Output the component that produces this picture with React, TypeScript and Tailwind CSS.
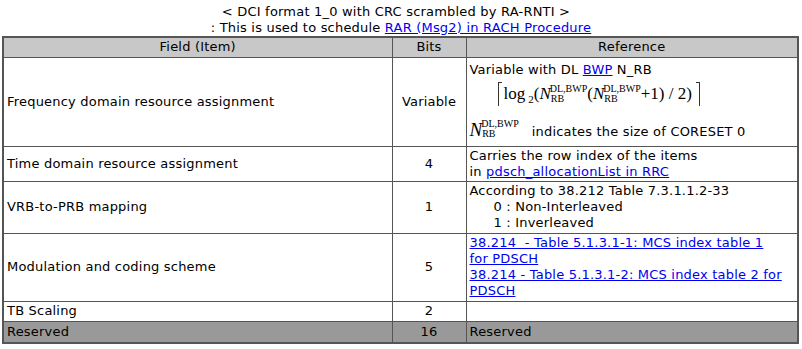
import React from 'react';

const link = 'text-[#0000ee] underline';

function NRB({ big = false }: { big?: boolean }) {
  return (
    <span className="inline-flex items-start tracking-normal" style={{ fontFamily: '"Liberation Serif", serif' }}>
      <span className={big ? 'italic text-[19px] leading-[22px]' : 'italic text-[17px] leading-[20px]'}>N</span>
      <span className="inline-flex flex-col text-[10px] leading-[10px] -ml-[1px]">
        <span>DL,BWP</span>
        <span className="pl-[1px]">RB</span>
      </span>
    </span>
  );
}

function Formula() {
  return (
    <div className="flex items-stretch h-[24px] ml-[28px] mt-[4px] tracking-normal" style={{ fontFamily: '"Liberation Serif", serif' }}>
      <span className="w-[4px] border-l border-t border-[#333]" />
      <span className="flex items-center text-[17px] pl-[2px]">
        <span>log</span>
        <span className="text-[11px] mt-[10px] ml-[3px]">2</span>
        <span>(</span>
        <NRB />
        <span>(</span>
        <NRB />
        <span>+1) / 2)</span>
      </span>
      <span className="w-[4px] ml-[4px] border-r border-t border-[#333]" />
    </div>
  );
}

export default function App() {
  const td = 'border border-[#555] px-[3px] py-[1px] align-middle';
  return (
    <div className="w-[802px] h-[349px] bg-white text-black text-[13px] leading-[16px] tracking-[0.2px]" style={{ fontFamily: '"DejaVu Sans", Verdana, sans-serif' }}>
      <div className="text-center pt-[4px] leading-[16px]">
        <div className="pr-[10px]">&lt; DCI format 1_0 with CRC scrambled by RA-RNTI &gt;</div>
        <div>: This is used to schedule <span className={link}>RAR (Msg2) in RACH Procedure</span></div>
      </div>
      <table className="mx-[2px] w-[797px] border-collapse border-2 border-[#555]">
        <colgroup>
          <col className="w-[389px]" />
          <col className="w-[74px]" />
          <col />
        </colgroup>
        <tbody>
          <tr className="bg-[#c8c8c8] h-[20px]">
            <td className={td + ' text-center'}>Field (Item)</td>
            <td className={td + ' text-center'}>Bits</td>
            <td className={td + ' text-center'}>Reference</td>
          </tr>
          <tr className="h-[89px]">
            <td className={td}>Frequency domain resource assignment</td>
            <td className={td + ' text-center'}>Variable</td>
            <td className={td}>
              <div>Variable with DL <span className={link}>BWP</span> N_RB</div>
              <Formula />
              <div className="flex items-end mt-[13px]">
                <NRB big />
                <span className="ml-[13px] mb-[1px]">indicates the size of CORESET 0</span>
              </div>
            </td>
          </tr>
          <tr className="h-[35px]">
            <td className={td}>Time domain resource assignment</td>
            <td className={td + ' text-center'}>4</td>
            <td className={td}>
              <div>Carries the row index of the items</div>
              <div>in <span className={link}>pdsch_allocationList in RRC</span></div>
            </td>
          </tr>
          <tr className="h-[52px]">
            <td className={td}>VRB-to-PRB mapping</td>
            <td className={td + ' text-center'}>1</td>
            <td className={td}>
              <div>According to 38.212 Table 7.3.1.1.2-33</div>
              <div className="pl-[24px]">0 : Non-Interleaved</div>
              <div className="pl-[24px]">1 : Inverleaved</div>
            </td>
          </tr>
          <tr className="h-[68px]">
            <td className={td}>Modulation and coding scheme</td>
            <td className={td + ' text-center'}>5</td>
            <td className={td}>
              <div className={link}>38.214&nbsp; - Table 5.1.3.1-1: MCS index table 1<br />for PDSCH</div>
              <div className={link}>38.214 - Table 5.1.3.1-2: MCS index table 2 for PDSCH</div>
            </td>
          </tr>
          <tr className="h-[20px]">
            <td className={td + ' py-0'}>TB Scaling</td>
            <td className={td + ' py-0 text-center'}>2</td>
            <td className={td + ' py-0'}></td>
          </tr>
          <tr className="h-[22px] bg-[#999999]">
            <td className={td + ' py-0'}>Reserved</td>
            <td className={td + ' py-0 text-center'}>16</td>
            <td className={td + ' py-0'}>Reserved</td>
          </tr>
        </tbody>
      </table>
    </div>
  );
}
